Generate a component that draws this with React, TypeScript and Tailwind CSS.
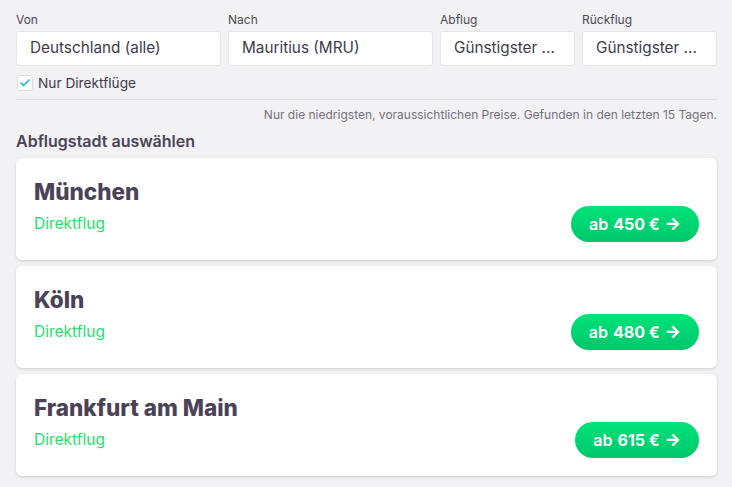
import { Check } from "lucide-react";

const cities = [
  { name: "München", price: 450 },
  { name: "Köln", price: 480 },
  { name: "Frankfurt am Main", price: 615 },
];

function Field({ label, value, width }: { label: string; value: string; width: string }) {
  return (
    <div className={`flex flex-col ${width}`}>
      <label className="text-[12px] leading-[16px] text-[#4a4a55] mb-[3px]">{label}</label>
      <div className="h-[35px] flex items-center px-[13px] bg-white border border-[#e6e5ea] rounded-[3px] text-[15.3px] text-[#3f3b4c] whitespace-nowrap overflow-hidden">
        {value}
      </div>
    </div>
  );
}

export default function App() {
  return (
    <div className="w-[732px] h-[487px] bg-[#f2f1f4] pl-4 pr-[15px] pt-[12px] overflow-hidden" style={{ fontFamily: "Inter, 'Noto Sans', sans-serif" }}>
      <div className="flex gap-[7px]">
        <Field label="Von" value="Deutschland (alle)" width="w-[205px]" />
        <Field label="Nach" value="Mauritius (MRU)" width="w-[205px]" />
        <Field label="Abflug" value="Günstigster ..." width="w-[135px]" />
        <Field label="Rückflug" value="Günstigster ..." width="w-[135px]" />
      </div>

      <div className="flex items-center gap-[5px] mt-[7px] ml-[1px]">
        <div className="w-[16px] h-[16px] bg-white border border-[#dddce2] rounded-[3px] flex items-center justify-center">
          <Check size={12} strokeWidth={3.5} className="text-[#1ab8e6]" />
        </div>
        <span className="text-[13.7px] text-[#3f3b4c]">Nur Direktflüge</span>
      </div>

      <div className="border-t border-[#dedde3] mt-[5px]" />
      <div className="text-right text-[12px] leading-[14px] text-[#75727f] mt-[8px]">
        Nur die niedrigsten, voraussichtlichen Preise. Gefunden in den letzten 15 Tagen.
      </div>

      <h2 className="text-[16px] font-semibold text-[#4a4458] mt-[9px] leading-[20px]">Abflugstadt auswählen</h2>

      <div className="flex flex-col gap-[6px] mt-[7px]">
        {cities.map((c) => (
          <div key={c.name} className="bg-white rounded-[6px] shadow-[0_1px_3px_rgba(0,0,0,0.15)] px-[18px] pt-[20px] pb-[18px] flex flex-col">
            <div className="text-[22.5px] leading-[28px] font-extrabold text-[#4a4358]">{c.name}</div>
            <div className="flex items-center justify-between h-[36px]">
              <span className="text-[15.5px] text-[#1ee26b]">Direktflug</span>
              <button className="h-[36px] px-[18px] rounded-full bg-gradient-to-b from-[#00e37a] to-[#00c76b] text-white text-[16px] flex items-center gap-[5px]">
                <span className="font-semibold">ab</span>
                <span className="font-bold">{c.price} €</span>
                <span className="font-extrabold text-[17px]">→</span>
              </button>
            </div>
          </div>
        ))}
      </div>
    </div>
  );
}
